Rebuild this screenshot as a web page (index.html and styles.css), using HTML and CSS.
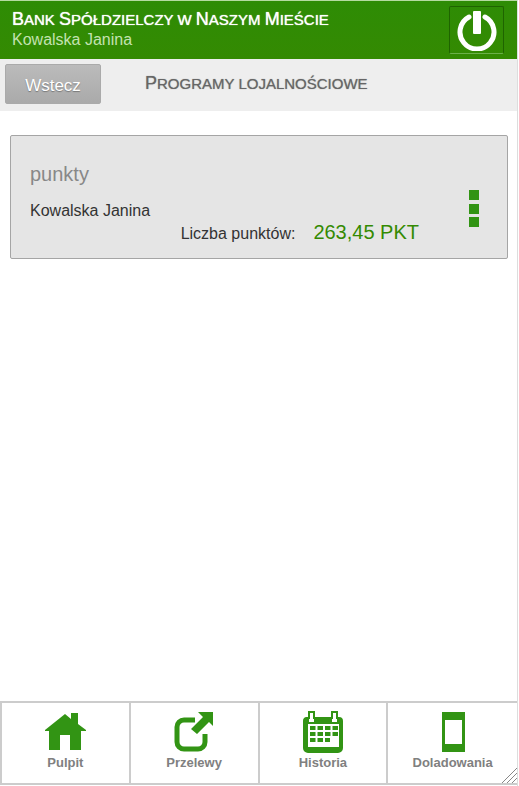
FILE: index.html
```html
<!doctype html>
<html lang="pl">
    <head>
        <meta charset="utf-8">
        <meta name="viewport" content="width=device-width, initial-scale=1.0">
        <title>Programy lojalnościowe</title>
        <link rel="stylesheet" href="styles.css">
    </head>
    <body>
        <div class="app">
            <header class="header">
                <div class="header-text">
                    <div class="bank-name caps"><span class="cap">B</span>ank <span class="cap">S</span>półdzielczy w <span class="cap">N</span>aszym <span class="cap">M</span>ieście</div>
                    <div class="user-name">Kowalska Janina</div>
                </div>
                <button class="logout-btn" type="button" aria-label="Wyloguj">
                    <svg width="40" height="42" viewBox="0 0 40 42">
                        <path d="M12 8A17 17 0 1 0 28 8" fill="none" stroke="#fff" stroke-width="5" stroke-linecap="round"/>
                        <rect x="16" y="2" width="8" height="23" rx="1" fill="#fff"/>
                    </svg>
                </button>
            </header>

            <div class="title-bar">
                <button class="back-btn" type="button">Wstecz</button>
                <h1 class="caps"><span class="cap">P</span>rogramy lojalnościowe</h1>
            </div>

            <main class="content">
                <section class="card">
                    <div class="card-body">
                        <h2>punkty</h2>
                        <div class="owner">Kowalska Janina</div>
                        <div class="points">
                            <span>Liczba punktów:</span>
                            <span class="points-value">263,45 PKT</span>
                        </div>
                    </div>
                    <button class="menu-btn" type="button" aria-label="Menu">
                        <svg width="12" height="40" viewBox="0 0 12 40" fill="#329414">
                            <rect x="1" y="1" width="10" height="10"/>
                            <rect x="1" y="15" width="10" height="10"/>
                            <rect x="1" y="28" width="10" height="10"/>
                        </svg>
                    </button>
                </section>
            </main>

            <nav class="nav">
                <a href="#">
                    <svg width="44" height="44" viewBox="0 0 44 44" fill="#329414">
                        <path d="M2 20 22 4l6 5V3h7v11l8 6v1h-5v19H27V25H17v15H6V21H2z"/>
                    </svg>
                    Pulpit
                </a>
                <a href="#">
                    <svg width="44" height="44" viewBox="0 0 44 44">
                        <path d="M23 10H12a7 7 0 0 0-7 7v15a7 7 0 0 0 7 7h14a7 7 0 0 0 7-7v-8" fill="none" stroke="#329414" stroke-width="5"/>
                        <path d="M26 2h15v14l-4-4-12 12-6-5 12-12z" fill="#329414"/>
                    </svg>
                    Przelewy
                </a>
                <a href="#">
                    <svg width="44" height="44" viewBox="0 0 44 44">
                        <path d="M8 9V2h5v7M31 9V2h5v7" fill="none" stroke="#329414" stroke-width="2"/>
                        <path fill="#329414" fill-rule="evenodd" d="M5 7h3v5h5V7h18v5h5V7h2a4 4 0 0 1 4 4v27a5 5 0 0 1-5 5H7a5 5 0 0 1-5-5V11a4 4 0 0 1 3-4zM7 14v23h31V14z"/>
                        <path d="M9 18h28M9 24h28M9 30h20" fill="none" stroke="#329414" stroke-width="4" stroke-dasharray="5.500 2"/>
                    </svg>
                    Historia
                </a>
                <a href="#">
                    <svg width="44" height="44" viewBox="0 0 44 44">
                        <path fill="#329414" fill-rule="evenodd" d="M11 2h23v40H11zM14 10v24h17V10z"/>
                    </svg>
                    Doladowania
                </a>
                <svg class="grip" width="15" height="15" viewBox="0 0 15 15" stroke="#888" fill="none">
                    <path d="M0 15 15 0M5 15 15 5M10 15l5-5"/>
                </svg>
            </nav>
        </div>
    </body>
</html>
```

FILE: styles.css
```css
* {
    box-sizing: border-box;
}

body {
    margin: 0;
    font-family: "Liberation Sans", Arial, sans-serif;
    font-size: 16px;
    line-height: 20px;
    color: #333;
    background-color: #fff;
}

button {
    font-family: inherit;
    font-size: inherit;
    cursor: pointer;
}

svg {
    display: block;
}

.app {
    display: flex;
    flex-direction: column;
    min-height: 100vh;
    margin-right: 1px;
    padding-bottom: 1px;
    border-right: 1px solid #ddd;
}

.header {
    display: flex;
    justify-content: space-between;
    align-items: flex-start;
    padding: 5px 13px 5px 12px;
    border-top: 1px solid #b5dba0;
    background: linear-gradient(#2e8c05, #348a02);
}

.header-text {
    padding-top: 3px;
}

.caps {
    font-size: 15px;
    font-weight: normal;
    text-transform: uppercase;
}

.cap {
    font-size: 18px;
}

.bank-name {
    color: #fff;
    text-shadow: 0 0 1px #fff;
}

.user-name {
    color: #c3e2b0;
}

.logout-btn {
    display: flex;
    justify-content: center;
    align-items: center;
    width: 55px;
    height: 48px;
    padding: 0;
    border: 1px solid #1f6400;
    border-bottom-color: #6cb04a;
    border-radius: 2px;
    background: none;
}

.title-bar {
    display: flex;
    align-items: center;
    gap: 44px;
    padding: 5px 5px 7px;
    background-color: #eee;
}

.back-btn {
    width: 96px;
    height: 40px;
    padding: 3px 0 0;
    border: 1px solid #aaa;
    border-radius: 2px;
    background: linear-gradient(#bbb, #aaa);
    font-size: 17px;
    color: #fff;
    text-shadow: 0 1px 1px #777;
}

.title-bar h1 {
    margin: 0;
    padding-bottom: 2px;
    color: #666;
    text-shadow: 0 0 1px #888;
}

.content {
    flex: 1;
    padding: 24px 9px 24px 10px;
}

.card {
    display: flex;
    justify-content: space-between;
    align-items: center;
    padding: 26px 27px 14px 19px;
    border: 1px solid #a5a5a5;
    border-radius: 2px;
    background-color: #e5e5e5;
}

.card-body {
    width: 389px;
}

.card h2 {
    margin: 0 0 15px;
    font-size: 20px;
    font-weight: normal;
    line-height: 24px;
    color: #888;
}

.points {
    display: flex;
    justify-content: flex-end;
    align-items: baseline;
    gap: 18px;
}

.points-value {
    font-size: 20px;
    line-height: 22px;
    color: #348a02;
}

.menu-btn {
    padding: 12px 0 0;
    border: 0;
    background: none;
}

.nav {
    position: relative;
    display: grid;
    grid-template-columns: repeat(4, 1fr);
    border-top: 2px solid #ccc;
    border-bottom: 2px solid #ccc;
    border-left: 2px solid #ccc;
}

.nav a {
    display: flex;
    flex-direction: column;
    align-items: center;
    gap: 1px;
    height: 80px;
    padding-top: 7px;
    border-right: 2px solid #ccc;
    font-size: 13px;
    font-weight: bold;
    line-height: 16px;
    color: #808080;
    text-decoration: none;
}

.nav a:last-of-type {
    border-right: 0;
}

.grip {
    position: absolute;
    right: 0;
    bottom: 0;
}
```
